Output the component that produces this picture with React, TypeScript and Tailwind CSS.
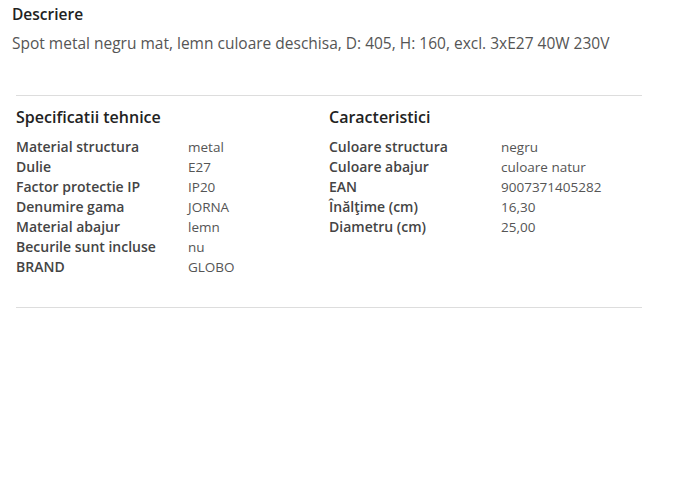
const specs: [string, string][] = [
  ["Material structura", "metal"],
  ["Dulie", "E27"],
  ["Factor protectie IP", "IP20"],
  ["Denumire gama", "JORNA"],
  ["Material abajur", "lemn"],
  ["Becurile sunt incluse", "nu"],
  ["BRAND", "GLOBO"],
];

const caracteristici: [string, string][] = [
  ["Culoare structura", "negru"],
  ["Culoare abajur", "culoare natur"],
  ["EAN", "9007371405282"],
  ["Înălţime (cm)", "16,30"],
  ["Diametru (cm)", "25,00"],
];

function SpecTable({ title, rows }: { title: string; rows: [string, string][] }) {
  return (
    <div>
      <h3 className="text-[16px] leading-[24px] font-semibold text-[#222]">{title}</h3>
      <div className="mt-2">
        {rows.map(([label, value]) => (
          <div key={label} className="grid grid-cols-[172px_1fr] leading-[20px]">
            <span className="text-[14px] font-semibold text-[#444]">{label}</span>
            <span className="text-[13.5px] text-[#555]">{value}</span>
          </div>
        ))}
      </div>
    </div>
  );
}

export default function App() {
  return (
    <div className="min-h-screen bg-white px-3 pt-[3px] font-['Open_Sans',sans-serif]">
      <h2 className="text-[15.5px] leading-[22px] font-semibold text-[#222]">Descriere</h2>
      <p className="mt-[7px] text-[15.5px] leading-[22px] text-[#555]">
        Spot metal negru mat, lemn culoare deschisa, D: 405, H: 160, excl. 3xE27 40W 230V
      </p>

      <div className="mt-[41px] ml-1 w-[626px] border-t border-b border-[#ddd] pt-[9px] pb-[30px]">
        <div className="grid grid-cols-2">
          <SpecTable title="Specificatii tehnice" rows={specs} />
          <SpecTable title="Caracteristici" rows={caracteristici} />
        </div>
      </div>
    </div>
  );
}
